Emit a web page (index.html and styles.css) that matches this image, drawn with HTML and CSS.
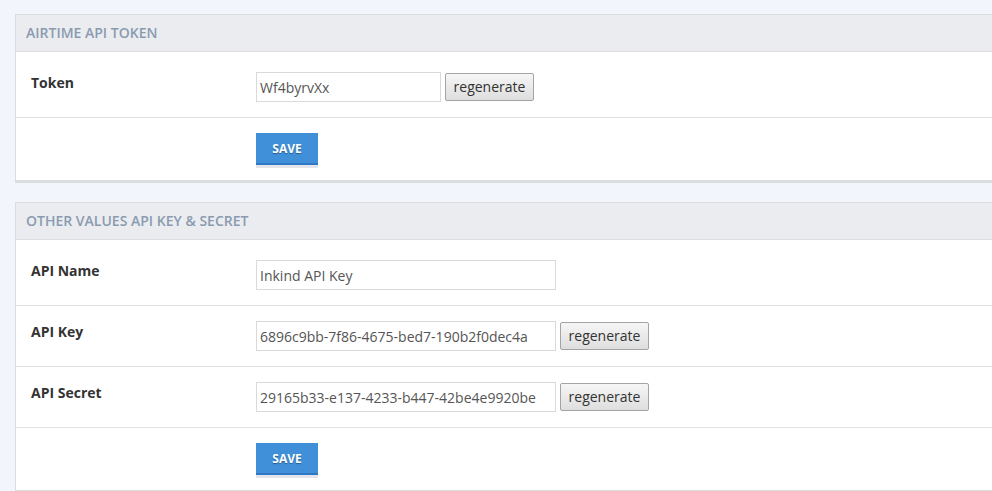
FILE: index.html
```html
<!DOCTYPE html>
<html>
<head>
<meta charset="utf-8">
<link rel="stylesheet" href="styles.css">
</head>
<body>
<div class="page">
  <section class="panel">
    <div class="panel-head">AIRTIME API TOKEN</div>
    <div class="row first">
      <div class="label">Token</div>
      <div class="field">
        <input class="input short" type="text" value="Wf4byrvXx">
        <button class="regen">regenerate</button>
      </div>
    </div>
    <div class="row save-row">
      <div class="label"></div>
      <div class="field"><button class="save">SAVE</button></div>
    </div>
  </section>

  <section class="panel">
    <div class="panel-head">OTHER VALUES API KEY &amp; SECRET</div>
    <div class="row first">
      <div class="label">API Name</div>
      <div class="field"><input class="input long" type="text" value="Inkind API Key"></div>
    </div>
    <div class="row">
      <div class="label">API Key</div>
      <div class="field">
        <input class="input long" type="text" value="6896c9bb-7f86-4675-bed7-190b2f0dec4a">
        <button class="regen">regenerate</button>
      </div>
    </div>
    <div class="row">
      <div class="label">API Secret</div>
      <div class="field">
        <input class="input long" type="text" value="29165b33-e137-4233-b447-42be4e9920be">
        <button class="regen">regenerate</button>
      </div>
    </div>
    <div class="row save-row">
      <div class="label"></div>
      <div class="field"><button class="save">SAVE</button></div>
    </div>
  </section>
</div>
</body>
</html>
```

FILE: styles.css
```css
html, body {
  margin: 0;
  padding: 0;
  background: #f2f6fc;
  overflow: hidden;
  font-family: "Open Sans", "DejaVu Sans", sans-serif;
}
.page {
  padding: 14px 0 0 15px;
  width: 1100px;
  display: flex;
  flex-direction: column;
  gap: 21px;
}
.panel {
  background: #fff;
  border: 1px solid #dcdcdc;
  box-shadow: 0 2px 0 #dcdde0;
}
.panel-head {
  height: 36px;
  line-height: 36px;
  background: #ebecf0;
  border-bottom: 1px solid #dcdcdc;
  padding-left: 10px;
  font-size: 14px;
  font-weight: 600;
  color: #8a9bb0;
}
.row {
  display: flex;
  padding: 15px 0 15px 15px;
  border-top: 1px solid #e2e2e2;
}
.row.first {
  border-top: none;
  padding-top: 20px;
}
.row.save-row {
  padding-bottom: 12px;
}
.label {
  width: 225px;
  flex: none;
  padding-top: 1px;
  font-size: 14px;
  font-weight: 700;
  color: #333;
  line-height: 20px;
}
.field {
  display: flex;
  align-items: center;
  gap: 4px;
}
.input {
  box-sizing: border-box;
  height: 30px;
  margin: 0;
  border: 1px solid #d9d9d9;
  padding: 0 3px;
  font-family: "Open Sans", "DejaVu Sans", sans-serif;
  font-size: 14px;
  color: #555;
  background: #fff;
  outline: none;
}
.input.short { width: 185px; }
.input.long { width: 300px; }
.regen {
  box-sizing: border-box;
  height: 28px;
  width: 89px;
  margin: 0;
  padding: 0 0 1px 0;
  border: 1px solid #a4a4a4;
  border-radius: 2px;
  background: linear-gradient(#f6f6f6, #dedede);
  font-family: "Open Sans", "DejaVu Sans", sans-serif;
  font-size: 14px;
  color: #333;
}
.save {
  box-sizing: border-box;
  width: 62px;
  height: 32px;
  margin: 0 0 3px 0;
  padding: 0;
  border: none;
  border-bottom: 2px solid #2f78c6;
  background: #3f8fd9;
  box-shadow: 0 3px 0 #e3e5ea;
  color: #fff;
  font-family: "Open Sans", "DejaVu Sans", sans-serif;
  font-size: 12px;
  font-weight: 700;
  text-shadow: 0 1px 1px rgba(0,0,0,0.35);
}
```
